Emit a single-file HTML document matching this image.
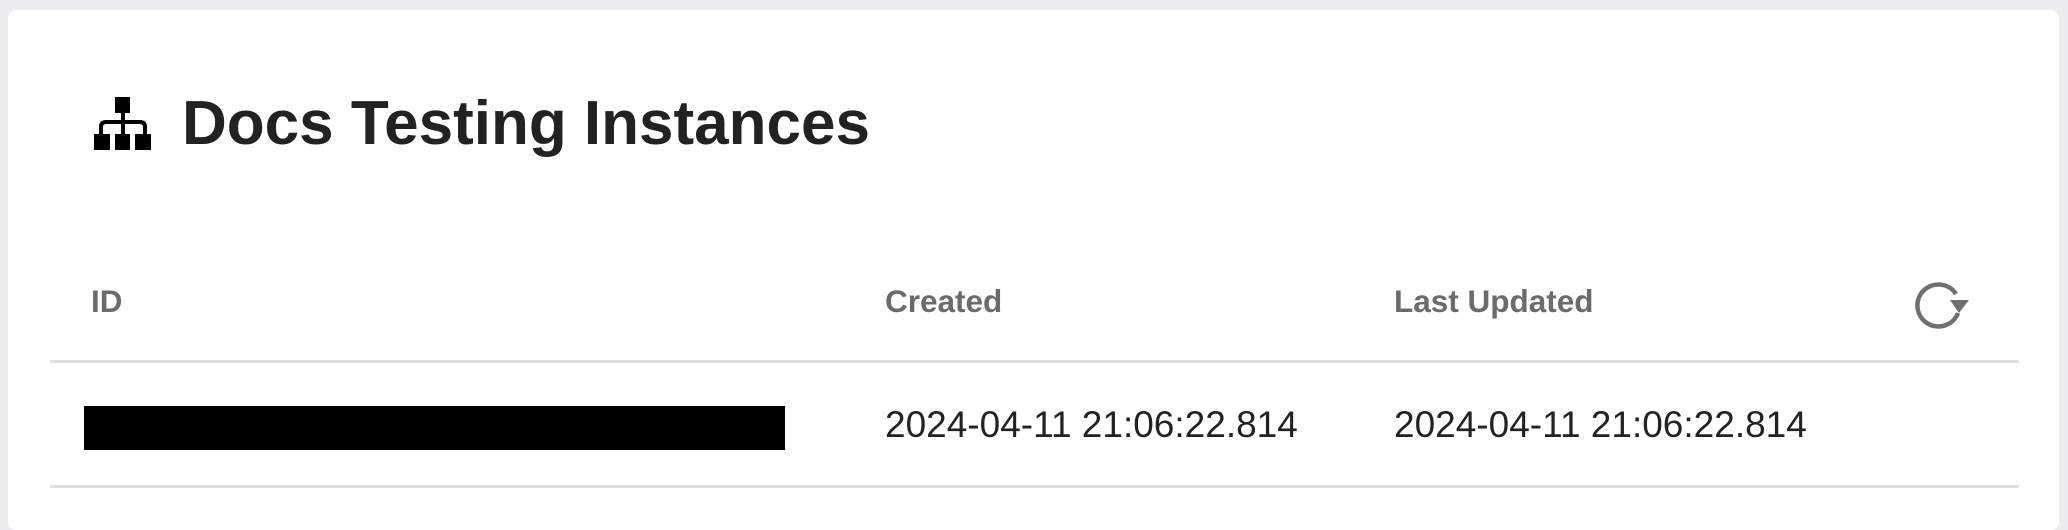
<!DOCTYPE html>
<html><head><style>
html,body{margin:0;width:2068px;height:502px;background:#ebebf0;overflow:hidden;font-family:"Liberation Sans",Arial,sans-serif;}
.card{position:absolute;left:8px;top:10px;width:2051px;height:520px;background:#fff;border-radius:8px;}
.t{position:absolute;white-space:nowrap;}
.line{position:absolute;left:50px;width:1969px;height:3px;background:#e0e0e0;}
</style></head><body>
<div class="card"></div>
<svg style="position:absolute;left:0;top:0" width="2068" height="502">
<rect x="115" y="97" width="15" height="16" fill="#000"/>
<rect x="121" y="112" width="4" height="22" fill="#000"/>
<path d="M101 134 V127 Q101 122 106 122 H140 Q145 122 145 127 V134" stroke="#000" stroke-width="4" fill="none"/>
<rect x="94" y="134" width="16" height="16" fill="#000"/>
<rect x="115" y="134" width="15" height="16" fill="#000"/>
<rect x="135" y="134" width="16" height="16" fill="#000"/>
<path d="M1956 294 A21 21 0 1 0 1958 313" stroke="#707070" stroke-width="4.5" fill="none"/>
<path d="M1950 300 L1969 300 L1959 313 Z" fill="#707070"/>
<rect x="84" y="406" width="701" height="44" fill="#000"/>
</svg>
<div class="t" style="left:182px;top:88px;font-size:62px;font-weight:bold;color:#222;">Docs Testing Instances</div>
<div class="t" style="left:91px;top:283px;font-size:31.5px;font-weight:bold;color:#6b6b6b;">ID</div>
<div class="t" style="left:885px;top:283px;font-size:31.5px;font-weight:bold;color:#6b6b6b;">Created</div>
<div class="t" style="left:1394px;top:283px;font-size:31.5px;font-weight:bold;color:#6b6b6b;">Last Updated</div>
<div class="line" style="top:360px"></div>
<div class="t" style="left:885px;top:404px;font-size:37px;color:#222">2024-04-11 21:06:22.814</div>
<div class="t" style="left:1394px;top:404px;font-size:37px;color:#222">2024-04-11 21:06:22.814</div>
<div class="line" style="top:485px"></div>
</body></html>
